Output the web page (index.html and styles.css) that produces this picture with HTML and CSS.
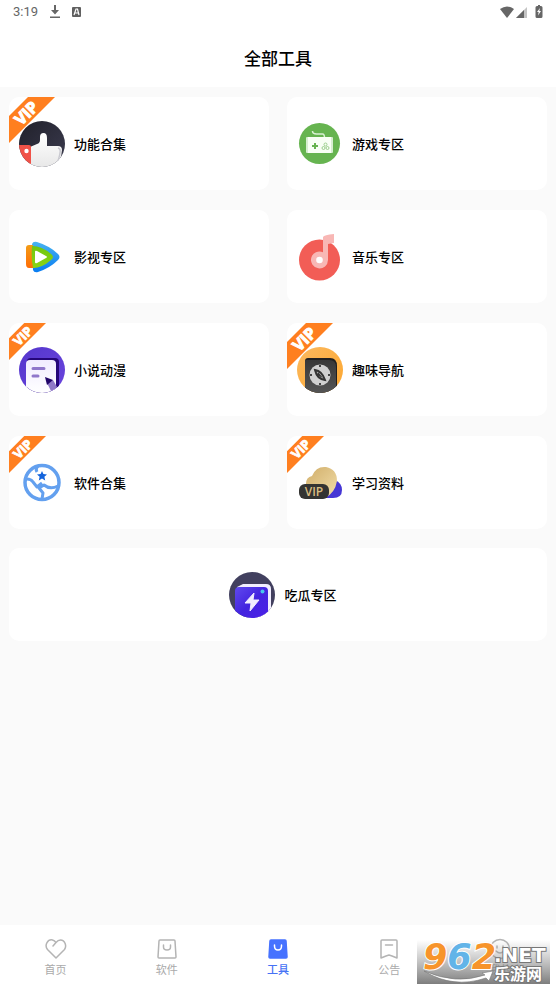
FILE: index.html
```html
<!DOCTYPE html>
<html lang="zh-CN">
<head>
<meta charset="utf-8">
<meta name="viewport" content="width=device-width, initial-scale=1">
<title>全部工具</title>
<link rel="stylesheet" href="styles.css">
</head>
<body>
<svg width="0" height="0" class="defs" aria-hidden="true">
  <defs>
    <clipPath id="disc"><circle cx="23" cy="23" r="23"/></clipPath>
    <linearGradient id="night" x1="0" y1="0" x2="1" y2="1"><stop offset="0" stop-color="#20202a"/><stop offset="1" stop-color="#3c3c50"/></linearGradient>
    <linearGradient id="hand" x1="0" y1="0" x2="0" y2="1"><stop offset="0" stop-color="#fff"/><stop offset="1" stop-color="#e8e8e8"/></linearGradient>
    <linearGradient id="sky" x1="0" y1="0" x2="0" y2="1"><stop offset="0" stop-color="#48b3f0"/><stop offset="1" stop-color="#087cf2"/></linearGradient>
    <linearGradient id="lime" x1="0" y1="0" x2="0" y2="1"><stop offset="0" stop-color="#70c60f"/><stop offset="1" stop-color="#8bd414"/></linearGradient>
    <linearGradient id="amber" x1="0" y1="0" x2="0" y2="1"><stop offset="0" stop-color="#f39c16"/><stop offset="1" stop-color="#ff6d05"/></linearGradient>
    <linearGradient id="violet" x1="0" y1="0" x2="1" y2="1"><stop offset="0" stop-color="#5436cc"/><stop offset="1" stop-color="#6a45dd"/></linearGradient>
    <linearGradient id="paper" x1="0" y1="0" x2="0" y2="1"><stop offset="0" stop-color="#f1ecff"/><stop offset="1" stop-color="#fff"/></linearGradient>
    <linearGradient id="honey" x1="0" y1="0" x2="1" y2="1"><stop offset="0" stop-color="#fbb95f"/><stop offset="1" stop-color="#fda72f"/></linearGradient>
    <linearGradient id="coal" x1="0" y1="0" x2="0" y2="1"><stop offset="0" stop-color="#383838"/><stop offset="1" stop-color="#555"/></linearGradient>
    <linearGradient id="gold" x1="0" y1="0" x2="1" y2="1"><stop offset="0" stop-color="#d0ad68"/><stop offset="1" stop-color="#f2deaa"/></linearGradient>
    <linearGradient id="indigo" x1="0" y1="0" x2="1" y2="1"><stop offset="0" stop-color="#6049ef"/><stop offset=".5" stop-color="#4324df"/><stop offset="1" stop-color="#4b20e7"/></linearGradient>
    <symbol id="ribbon" viewBox="0 0 46 46">
      <path d="M0 19 19 0H46L0 46Z" fill="#ff7f1f"/>
      <text x="17" y="22" transform="rotate(-45 17 16)" text-anchor="middle" class="ribbon-text">VIP</text>
    </symbol>
  </defs>
</svg>

<div class="app">
  <header class="top">
    <div class="status">
      <span class="clock">3:19</span>
      <svg width="10" height="14" viewBox="0 0 10 14" fill="#666" aria-hidden="true"><path d="M4 0h2v5h3L5 9.500 1 5h3zM0 11.500h10v1.500H0z"/></svg>
      <svg width="9" height="10" viewBox="0 0 9 10" aria-hidden="true"><rect width="9" height="10" rx="1" fill="#606060"/><path d="M2 8 4 2h1.500L7 8M3 6h3" fill="none" stroke="#fff" stroke-width="1.200"/></svg>
      <span class="spacer"></span>
      <svg class="radio" width="27" height="12" viewBox="0 0 27 12" aria-hidden="true"><path d="M0 3Q7-2 14 3L7 12Z" fill="#666"/><path d="M16 12 27 1v11Z" fill="#c4c4c4"/><path d="M16 12 24 4v8Z" fill="#666"/></svg>
      <svg width="8" height="13" viewBox="0 0 8 13" aria-hidden="true"><path d="M2 1h1V0h2v1h1q1.500 0 1.500 1.500v9Q7.500 13 6 13H2Q.5 13 .5 11.500v-9Q.5 1 2 1Z" fill="#666"/><path d="M5 3 2 7h1.700L3 10.500 6 6H4.300Z" fill="#fff"/></svg>
    </div>
    <h1>全部工具</h1>
  </header>

  <main class="tools">
    <a class="card" href="#features">
      <svg class="ribbon ribbon-large" aria-hidden="true"><use href="#ribbon"/></svg>
      <svg class="icon" viewBox="0 0 46 46" aria-hidden="true"><g clip-path="url(#disc)"><path d="M0 0h46v46H0z" fill="url(#night)"/><path d="M11 46V26l7-3q3-1 3-4v-3q0-4 3.500-4t3.500 5v8h11q4 0 4 4-1 11-5 14l-8 3Z" fill="url(#hand)"/><path d="M39 27q3 1 2 5-1 7-4 11" fill="none" stroke="#c9c9d0" stroke-width="1.500"/><path d="M0 24h10q2 0 2 2v20H0Z" fill="#f05248"/><circle cx="7.500" cy="30" r="2.200" fill="#fff"/></g></svg>
      <span>功能合集</span>
    </a>
    <a class="card" href="#games">
      <svg class="icon" viewBox="0 0 46 46" aria-hidden="true"><circle cx="22.500" cy="22.500" r="20.500" fill="#66b450"/><path d="M15.500 10q0 3 4 3t6 0 2 4" fill="none" stroke="#d9f0d2" stroke-width="1.500"/><rect x="9" y="16" width="27" height="16" rx="1" fill="#d6eed0"/><path d="M11 16h23v16H11z" fill="#f8fff5"/><path d="M15 25h6M18 22v6" stroke="#66b450" stroke-width="2"/><g fill="none" stroke="#9ccf8e"><circle cx="28.500" cy="23.500" r="1.500"/><circle cx="26.500" cy="27" r="1.500"/><circle cx="30.500" cy="27" r="1.500"/></g></svg>
      <span>游戏专区</span>
    </a>
    <a class="card" href="#video">
      <svg class="icon" viewBox="0 0 46 46" aria-hidden="true"><path d="M13 10q1-3 5-2 13 4 21 12 3 3 0 6-8 8-20 12-4 1-5-2Z" fill="url(#sky)"/><path d="M7 14q0-3 3-3h4l2 23h-6q-3 0-3-4Z" fill="url(#amber)"/><path d="M13 12q10 0 19 8 4 3 0 6-9 8-18 8-2-10-1-22Z" fill="url(#lime)"/><path d="M16 18q0-2 2-1l9 5q2 1 0 2l-9 5q-2 1-2-1Z" fill="#fff"/></svg>
      <span>影视专区</span>
    </a>
    <a class="card" href="#music">
      <svg class="icon" viewBox="0 0 46 46" aria-hidden="true"><circle cx="22.500" cy="26" r="20.500" fill="#f25d56"/><path d="M26 3Q27 1 37 0v9l-6 1v16a8.500 8.500 0 1 1-5-7.800Z" fill="#f8b7b5"/><circle cx="22.500" cy="26" r="3.300" fill="#fff"/></svg>
      <span>音乐专区</span>
    </a>
    <a class="card" href="#novels">
      <svg class="ribbon" aria-hidden="true"><use href="#ribbon"/></svg>
      <svg class="icon" viewBox="0 0 46 46" aria-hidden="true"><g clip-path="url(#disc)"><path d="M0 0h46v46H0z" fill="url(#violet)"/><path d="M8 14q0-3 4-3h24q4 0 4 4v31H8Z" fill="#250679"/><path d="M7 17q0-4 4-4h22q4 0 4 4v29H7Z" fill="url(#paper)"/><path d="M14 21.500h11M14 29h5" stroke="#9077cb" stroke-width="3" stroke-linecap="round"/><path d="m28 36 6-3 7 12-7 3Z" fill="#8f78c7"/><path d="m26 30 8 3-6 5Z" fill="#210569"/></g></svg>
      <span>小说动漫</span>
    </a>
    <a class="card" href="#fun">
      <svg class="ribbon ribbon-large" aria-hidden="true"><use href="#ribbon"/></svg>
      <svg class="icon" viewBox="0 0 46 46" aria-hidden="true"><g clip-path="url(#disc)"><path d="M0 0h46v46H0z" fill="url(#honey)"/><path d="M8 14q0-3 3-3h22q7 0 7 8v27H8Z" fill="#202020"/><path d="M8 13h24q7 0 7 7v26H8Z" fill="url(#coal)"/><circle cx="23" cy="28" r="10.500" fill="#d0d0d0"/><path d="M23 18v2M23 36v2M13 28h2M31 28h2" stroke="#444" stroke-width="2"/><path d="M18 23q7 1 10 10-8-1-10-10Z" fill="#bbb" stroke="#333" stroke-width="2"/><path d="m21 25 5 6-6-3Z" fill="#333"/></g></svg>
      <span>趣味导航</span>
    </a>
    <a class="card" href="#software">
      <svg class="ribbon" aria-hidden="true"><use href="#ribbon"/></svg>
      <svg class="icon" viewBox="0 0 46 46" aria-hidden="true"><circle cx="23" cy="22.500" r="17" fill="#fff" stroke="#63a0ef" stroke-width="3.500"/><path d="M19 6q-3 3-1 6M8 19q4 0 6 3l4 5 5-4M23 39l1-6-4-5 5-3q6 5 14 1" fill="none" stroke="#63a0ef" stroke-width="3" stroke-linejoin="round"/><path d="m23 11 1.400 3 3.600.4-2.600 2.300.8 3.700-3.200-1.900-3.200 1.900.8-3.700-2.600-2.300 3.600-.4Z" fill="#1464dc"/></svg>
      <span>软件合集</span>
    </a>
    <a class="card" href="#study">
      <svg class="ribbon" aria-hidden="true"><use href="#ribbon"/></svg>
      <svg class="icon" viewBox="0 0 46 46" aria-hidden="true"><path d="M38 20q7 3 7 10 0 8-9 8H20Z" fill="#4536d5"/><path d="M9 24q0-7 6-8Q19 6 29 7q11 2 11 14-2 12-12 17H14q-8 0-5-14Z" fill="url(#gold)"/><rect x="2" y="24" width="30" height="15" rx="6" fill="#343432"/><text x="17" y="36" text-anchor="middle" class="vip-plate">VIP</text></svg>
      <span>学习资料</span>
    </a>
    <a class="card card-wide" href="#gossip">
      <svg class="icon" viewBox="0 0 46 46" aria-hidden="true"><g clip-path="url(#disc)"><path d="M0 0h46v46H0z" fill="#42405f"/><path d="m8 15 6-3h23q5 0 5 5v29H18Z" fill="#f1edff"/><path d="M6 19q0-4 4-4h25q4 0 4 4v27H6Z" fill="url(#indigo)"/><path d="m25 21-9 10h6l-1 8 9-11h-6Z" fill="#f1edff" stroke="#f1edff" stroke-linejoin="round"/><circle cx="33.500" cy="19.500" r="2" fill="#46c5ed"/></g></svg>
      <span>吃瓜专区</span>
    </a>
  </main>

  <nav class="tabs">
    <a href="#home"><svg viewBox="0 0 22 22" aria-hidden="true"><path d="M11 20 2.500 11.500C-1 7 3 1 7.500 2q2 .5 3.500 2.500Q13 2 15.500 2C20 2 22 8 19.500 11.500ZM11 4.500 8 8"/></svg><span>首页</span></a>
    <a href="#apps"><svg viewBox="0 0 22 22" aria-hidden="true"><path d="M4 2h14q1 0 1 1l1 16q0 1-1 1H3q-1 0-1-1L3 3q0-1 1-1ZM7.500 7v2q0 3 3.500 3t3.500-3V7"/></svg><span>软件</span></a>
    <a href="#tools" class="active" aria-current="page"><svg viewBox="0 0 22 22" aria-hidden="true"><path class="bag" d="M4 2h14q1 0 1 1l1 16q0 1-1 1H3q-1 0-1-1L3 3q0-1 1-1Z"/><path class="smile" d="M7.500 7v1q0 4 3.500 4t3.500-4V7"/></svg><span>工具</span></a>
    <a href="#news"><svg viewBox="0 0 22 22" aria-hidden="true"><path d="M4 2h14q1 0 1 1v17L14 18l-3-1-3 1-5 2V3q0-1 1-1ZM7.500 7h7"/></svg><span>公告</span></a>
    <a href="#me"><svg viewBox="0 0 22 22" aria-hidden="true"><circle cx="11" cy="11" r="9.500"/><path d="M8 8v2M14 8v2M7 13q4 4 8 0"/></svg><span>我的</span></a>
  </nav>

  <svg class="watermark" width="133" height="44" viewBox="0 0 133 44" role="img" aria-label="962.NET 乐游网">
    <defs><linearGradient id="shade" x1="0" y1="0" x2="0" y2="1"><stop offset="0" stop-color="#888" stop-opacity="0"/><stop offset="1" stop-color="#777" stop-opacity=".95"/></linearGradient></defs>
    <path d="M0 0h133v44H0z" fill="url(#shade)"/>
    <path d="M7 31q32 14 61 4l-3-2 11-2-4 10-3-3Q36 49 7 31Z" fill="#fff" stroke="#777" stroke-width=".6"/>
    <text x="6" y="29" class="digits"><tspan fill="#f7942b">9</tspan><tspan fill="#62b4e8">6</tspan><tspan fill="#f7942b">2</tspan></text>
    <text x="77" y="22" class="net">.NET</text>
    <text x="77" y="40" class="brand">乐游网</text>
  </svg>
</div>
</body>
</html>
```

FILE: styles.css
```css
* {
  box-sizing: border-box;
}

body {
  margin: 0;
  background: #fafafa;
  color: #000;
  font-family: Roboto, "Noto Sans CJK SC", sans-serif;
}

a {
  color: inherit;
  text-decoration: none;
}

.defs {
  position: absolute;
}

.app {
  position: relative;
  display: flex;
  flex-direction: column;
  min-height: 100vh;
}

.top {
  background: #fff;
}

.status {
  display: flex;
  align-items: center;
  gap: 12px;
  height: 23px;
  padding: 0 13px;
  color: #666;
  font-size: 13px;
}

.status .radio {
  margin-right: -4px;
}

.spacer {
  flex: 1;
}

.top h1 {
  margin: 0;
  padding: 12px 0 4px;
  font-size: 17px;
  font-weight: 500;
  line-height: 48px;
  text-align: center;
}

.tools {
  display: grid;
  grid-template-columns: 1fr 1fr;
  gap: 20px 18px;
  padding: 10px 9px;
}

.card {
  position: relative;
  display: flex;
  align-items: center;
  gap: 9px;
  min-height: 93px;
  padding: 0 0 0 10px;
  overflow: hidden;
  border-radius: 10px;
  background: #fff;
  font-size: 13px;
  font-weight: 500;
}

.card-wide {
  grid-column: 1 / -1;
  justify-content: center;
  margin-top: -1px;
}

.icon {
  width: 46px;
  height: 46px;
  overflow: visible;
  z-index: 1;
}

.ribbon {
  position: absolute;
  top: 0;
  left: 0;
  width: 37px;
  height: 37px;
}

.ribbon-large {
  width: 46px;
  height: 46px;
}

.ribbon-text {
  fill: #fff;
  stroke: #fff;
  stroke-width: 1px;
  font: 700 16px "Open Sans", sans-serif;
}

.vip-plate {
  fill: #d9bd81;
  font: 600 12px "Open Sans", sans-serif;
}

.tabs {
  display: grid;
  grid-template-columns: repeat(5, 1fr);
  height: 65px;
  margin-top: auto;
  padding-top: 13px;
  background: #fff;
  color: #aaa;
  font-size: 11px;
  line-height: 16px;
}

.tabs a {
  display: flex;
  flex-direction: column;
  align-items: center;
  gap: 3px;
}

.tabs svg {
  width: 22px;
  height: 22px;
  fill: none;
  stroke: #b4b4b4;
  stroke-width: 1.5;
  stroke-linejoin: round;
  stroke-linecap: round;
}

.tabs .active {
  color: #4672f5;
  font-weight: 500;
}

.tabs .bag {
  fill: #4672ff;
  stroke: #4672ff;
}

.tabs .smile {
  stroke: #fff;
}

.watermark {
  position: absolute;
  right: 6px;
  bottom: 6px;
  overflow: visible;
}

.digits {
  font: italic 700 35px "DejaVu Sans", sans-serif;
  stroke: #fff;
  stroke-width: 2px;
  paint-order: stroke;
}

.net,
.brand {
  fill: #fff;
  stroke: #777;
  stroke-width: 2px;
  paint-order: stroke;
}

.net {
  font: 700 20px "DejaVu Sans", sans-serif;
}

.brand {
  font: 700 16px "Noto Sans CJK SC", sans-serif;
}
```
